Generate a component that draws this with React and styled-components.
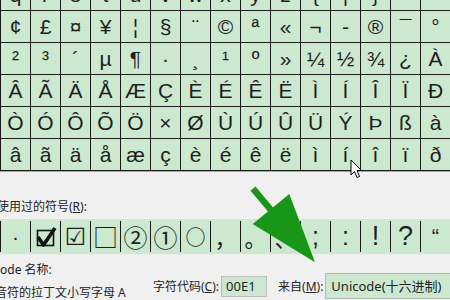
import React from 'react';
import styled, { createGlobalStyle } from 'styled-components';

const GlobalStyle = createGlobalStyle`
  html, body {
    margin: 0;
    padding: 0;
    background: #f0f0f0;
  }
  body {
    width: 450px;
    height: 300px;
    overflow: hidden;
    font-family: "Noto Sans", "Noto Sans CJK SC", sans-serif;
  }
`;

const Page = styled.div`
  position: relative;
  width: 450px;
  height: 300px;
  overflow: hidden;
  background: #f0f0f0;
  color: #222;
`;

const GridFrame = styled.div`
  margin-top: -21px;
  border-bottom: 1px solid #a3a3a3;
`;

const CharGrid = styled.div`
  display: grid;
  grid-template-columns: repeat(15, 29px);
  grid-auto-rows: 31px;
  gap: 1px;
  padding: 0 0 1px 1px;
  background: #1b1b1b;
`;

const CharCell = styled.div`
  background: #cce8cf;
  display: flex;
  align-items: center;
  justify-content: center;
  font-family: "Liberation Sans", Arial, sans-serif;
  font-size: 21px;
  line-height: 1;
  color: #1e1e1e;
  overflow: hidden;
`;

const SectionLabel = styled.div`
  margin: 27px 0 4px -27px;
  font-size: 12px;
  line-height: 16px;
  white-space: nowrap;
`;

const Key = styled.span`
  text-decoration: underline;
`;

const RecentRow = styled.div`
  display: flex;
  height: 35px;
  padding: 2px 0;
  box-sizing: border-box;
  background: #cce8cf;
`;

const RecentCell = styled.div`
  flex: 0 0 30px;
  box-sizing: border-box;
  border-left: 1px solid #1b1b1b;
  display: flex;
  align-items: center;
  justify-content: center;
  font-family: ${p => (p.$cjk ? '"Noto Sans CJK SC", sans-serif' : '"Liberation Sans", "DejaVu Sans", sans-serif')};
  font-size: ${p => p.$size || 21}px;
  line-height: 1;
  color: #1e1e1e;
  overflow: hidden;
`;

const Lower = styled.div`
  display: flex;
  align-items: flex-start;
  margin-top: 8px;
  font-size: 12px;
  white-space: nowrap;
`;

const NameBlock = styled.div`
  flex: 0 0 153px;
  display: flex;
  flex-direction: column;
  gap: 7px;
  line-height: 16px;
`;

const NameLine = styled.div`
  margin-left: ${p => p.$shift}px;
`;

const Fields = styled.div`
  display: flex;
  align-items: center;
  margin-top: 11px;
`;

const FieldLabel = styled.span`
  margin-left: ${p => p.$gap || 0}px;
  margin-right: 2px;
`;

const CodeInput = styled.div`
  width: 46px;
  height: 21px;
  box-sizing: border-box;
  border: 1px solid #bdbdbd;
  background: #cce8cf;
  padding: 0 4px;
  line-height: 19px;
  font-size: 13px;
`;

const FromSelect = styled.div`
  width: 140px;
  height: 26px;
  box-sizing: border-box;
  border: 1px solid #b5b5b5;
  background: #cce8cf;
  padding: 0 5px;
  line-height: 24px;
  font-size: 13px;
`;

const Pointer = styled.svg`
  position: absolute;
  left: 350px;
  top: 159px;
`;

const GreenArrow = styled.svg`
  position: absolute;
  left: 240px;
  top: 180px;
`;

const rows = [
  'qrstuvwxyz{|}~ ',
  '¢£¤¥¦§¨©ª«¬-®¯°',
  '²³´µ¶·¸¹º»¼½¾¿À',
  'ÂÃÄÅÆÇÈÉÊËÌÍÎÏÐ',
  'ÒÓÔÕÖ×ØÙÚÛÜÝÞßà',
  'âãäåæçèéêëìíîïð',
];

const BoldCheck = () => (
  <svg width="22" height="22" viewBox="0 0 22 22">
    <rect x="2.5" y="4.5" width="16" height="15" fill="none" stroke="#111" strokeWidth="1.6" />
    <path d="M3 11 L8.5 19 L20 2" fill="none" stroke="#111" strokeWidth="3.6" strokeLinejoin="round" />
  </svg>
);

const recent = [
  { c: '·' },
  { icon: true },
  { c: '☑', size: 24 },
  { c: '□', size: 25, cjk: true },
  { c: '②', size: 24, cjk: true },
  { c: '①', size: 24, cjk: true },
  { c: '○', size: 20, cjk: true },
  { c: '，', size: 22, cjk: true },
  { c: '。', size: 22, cjk: true },
  { c: '、', size: 22, cjk: true },
  { c: ';', size: 25 },
  { c: ':', size: 25 },
  { c: '!', size: 27 },
  { c: '?', size: 27 },
  { c: '“', size: 22 },
];

export default function App() {
  return (
    <>
      <GlobalStyle />
      <Page>
        <GridFrame>
          <CharGrid>
            {rows.map((row, r) =>
              Array.from(row).map((ch, i) => <CharCell key={`${r}-${i}`}>{ch}</CharCell>)
            )}
          </CharGrid>
        </GridFrame>

        <SectionLabel>
          最近使用过的符号(<Key>R</Key>):
        </SectionLabel>

        <RecentRow>
          {recent.map((item, i) => (
            <RecentCell key={i} $size={item.size} $cjk={item.cjk}>
              {item.icon ? <BoldCheck /> : item.c}
            </RecentCell>
          ))}
        </RecentRow>

        <Lower>
          <NameBlock>
            <NameLine $shift={-25}>Unicode 名称:</NameLine>
            <NameLine $shift={-29}>带锐音符的拉丁文小写字母 A</NameLine>
          </NameBlock>
          <Fields>
            <FieldLabel>
              字符代码(<Key>C</Key>):
            </FieldLabel>
            <CodeInput>00E1</CodeInput>
            <FieldLabel $gap={11}>
              来自(<Key>M</Key>):
            </FieldLabel>
            <FromSelect>Unicode(十六进制)</FromSelect>
          </Fields>
        </Lower>

        <Pointer width="13" height="20" viewBox="0 0 13 20">
          <path d="M1 1 L1 16 L4.5 12.5 L7 18.5 L9.5 17.5 L7 11.5 L11.5 11.5 Z" fill="#fff" stroke="#000" strokeWidth="1" strokeLinejoin="round" />
        </Pointer>

        <GreenArrow width="80" height="90" viewBox="0 0 80 90">
          <line x1="13" y1="8.7" x2="36" y2="36" stroke="#179617" strokeWidth="6.5" />
          <polygon points="12.7,44 49.3,14 75,82.3" fill="#179617" />
        </GreenArrow>
      </Page>
    </>
  );
}
